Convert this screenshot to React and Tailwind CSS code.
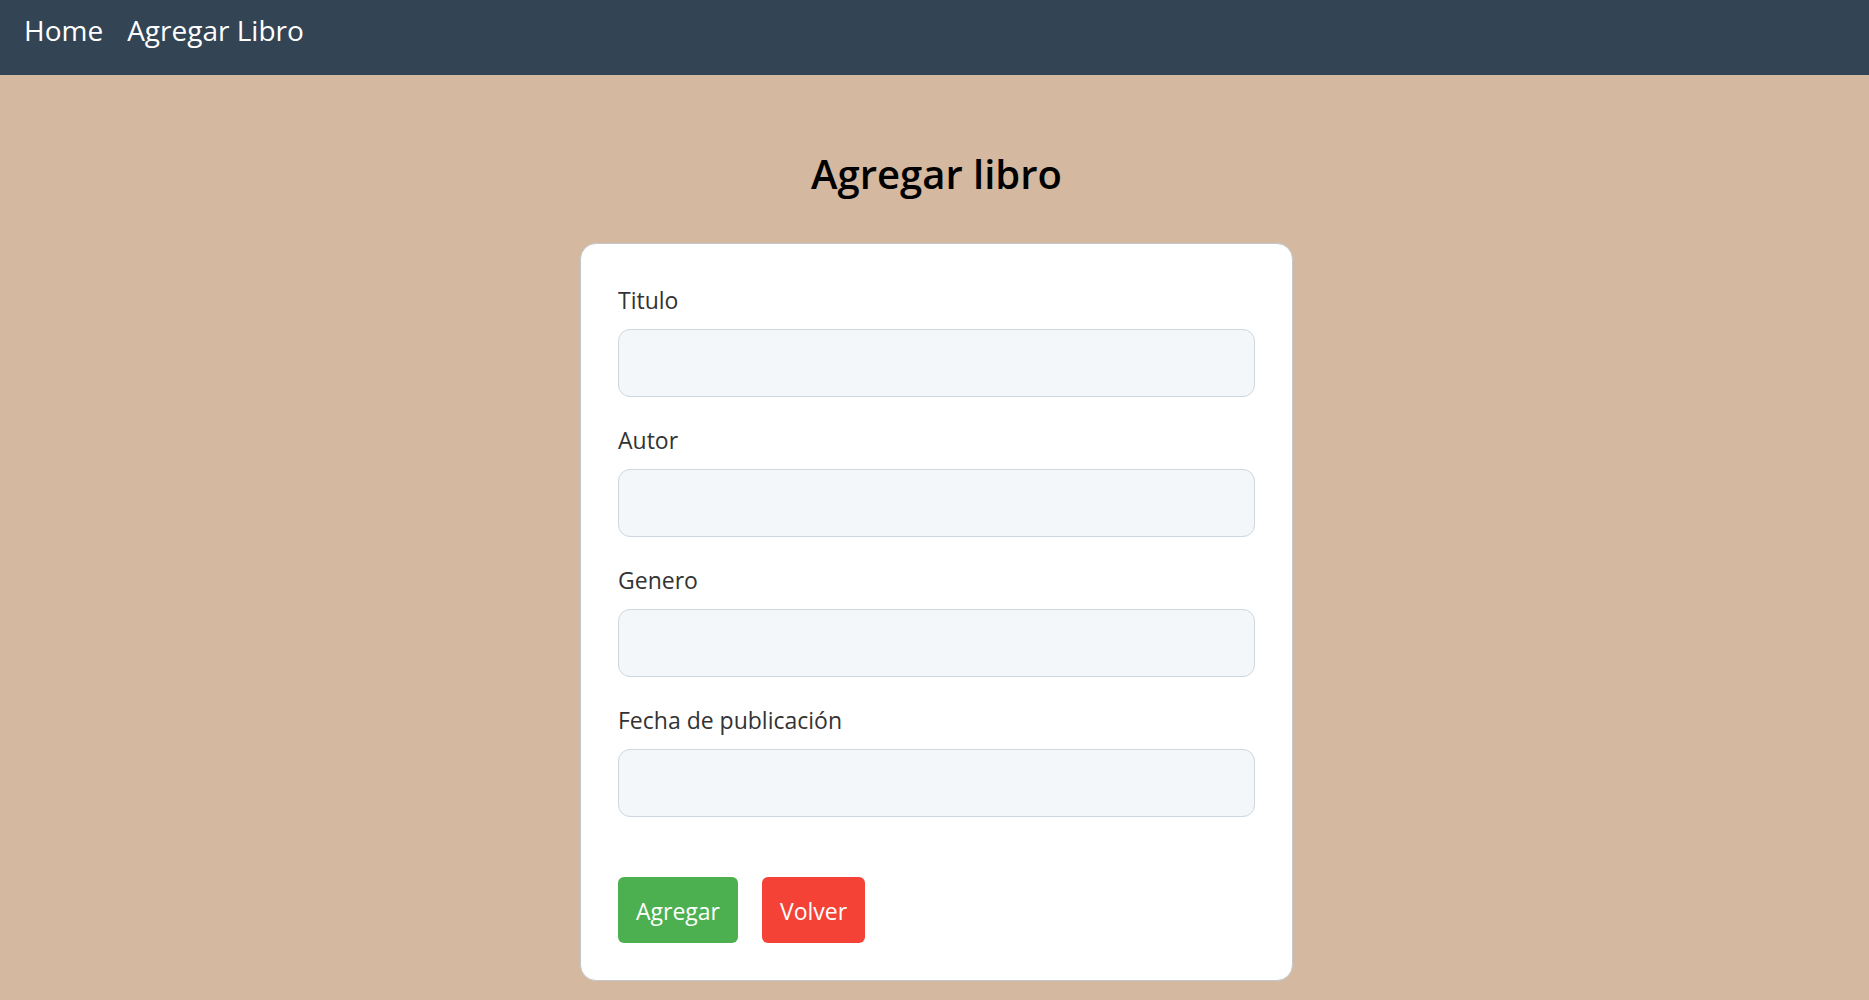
const fields = [
  { id: "titulo", label: "Titulo" },
  { id: "autor", label: "Autor" },
  { id: "genero", label: "Genero" },
  { id: "fecha", label: "Fecha de publicación" },
];

export default function App() {
  return (
    <div className="min-h-screen bg-[#d4b8a0] pb-[18px] font-['Open_Sans','Noto_Sans',sans-serif]">
      <nav className="flex h-[75px] gap-6 bg-[#334455] px-6 pt-[11px] text-[28px] leading-[38px] text-white">
        <a href="#home">Home</a>
        <a href="#agregar">Agregar Libro</a>
      </nav>
      <main className="pt-[71px] pl-1">
        <div className="mx-auto max-w-[713px]">
          <h1 className="text-center text-[40px] leading-[56px] font-semibold text-black">Agregar libro</h1>
          <form className="mt-[41px] rounded-2xl border border-[#c2c7cb] bg-white px-[37px] pt-[38px] pb-[37px] text-[23px]">
            {fields.map((f) => (
              <div key={f.id} className="mb-[25px] flex flex-col">
                <label htmlFor={f.id} className="mb-[10px] leading-[37px] text-[#333]">{f.label}</label>
                <input id={f.id} type="text" className="h-[68px] w-full rounded-xl border border-[#ced6de] bg-[#f3f7fa] px-4 text-[#333]" />
              </div>
            ))}
            <div className="flex gap-6 pt-[35px] text-white">
              <button type="button" className="h-[66px] rounded-md bg-[#4caf50] px-[18px] pt-[2px]">Agregar</button>
              <button type="button" className="h-[66px] rounded-md bg-[#f44336] px-[18px] pt-[2px]">Volver</button>
            </div>
          </form>
        </div>
      </main>
    </div>
  );
}
